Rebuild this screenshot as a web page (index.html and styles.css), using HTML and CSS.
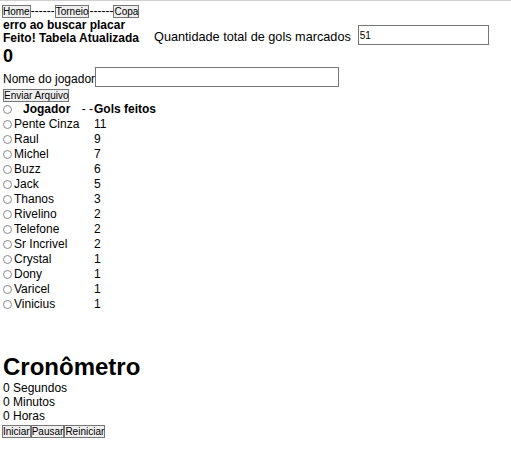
FILE: index.html
```html
<!DOCTYPE html>
<html lang="pt-BR">
<head>
<meta charset="utf-8">
<title>Placar</title>
<link rel="stylesheet" href="styles.css">
</head>
<body>
<div class="topline"></div>
<nav class="nav"><button class="btn">Home</button><span class="dash">------</span><button class="btn">Torneio</button><span class="dash">------</span><button class="btn">Copa</button></nav>
<div class="status">
  <div class="msgs">
    <h4 class="msg">erro ao buscar placar</h4>
    <h4 class="msg">Feito! Tabela Atualizada</h4>
    <h2 class="zero">0</h2>
  </div>
  <div class="total">
    <span class="total-label">Quantidade total de gols marcados</span>
    <input class="total-input" type="text" value="51">
  </div>
</div>
<div class="player-form">
  <span class="player-label">Nome do jogador</span><input class="player-input" type="text">
</div>
<div class="send-row"><button class="btn">Enviar Arquivo</button></div>
<div class="table">
  <div class="row head">
    <div class="c1"><span class="radio"></span><span class="h-name">Jogador</span><span class="h-dash">- -</span></div>
    <div class="c2">Gols feitos</div>
  </div>
  <div class="row"><div class="c1"><span class="radio"></span>Pente Cinza</div><div class="c2">11</div></div>
  <div class="row"><div class="c1"><span class="radio"></span>Raul</div><div class="c2">9</div></div>
  <div class="row"><div class="c1"><span class="radio"></span>Michel</div><div class="c2">7</div></div>
  <div class="row"><div class="c1"><span class="radio"></span>Buzz</div><div class="c2">6</div></div>
  <div class="row"><div class="c1"><span class="radio"></span>Jack</div><div class="c2">5</div></div>
  <div class="row"><div class="c1"><span class="radio"></span>Thanos</div><div class="c2">3</div></div>
  <div class="row"><div class="c1"><span class="radio"></span>Rivelino</div><div class="c2">2</div></div>
  <div class="row"><div class="c1"><span class="radio"></span>Telefone</div><div class="c2">2</div></div>
  <div class="row"><div class="c1"><span class="radio"></span>Sr Incrivel</div><div class="c2">2</div></div>
  <div class="row"><div class="c1"><span class="radio"></span>Crystal</div><div class="c2">1</div></div>
  <div class="row"><div class="c1"><span class="radio"></span>Dony</div><div class="c2">1</div></div>
  <div class="row"><div class="c1"><span class="radio"></span>Varicel</div><div class="c2">1</div></div>
  <div class="row"><div class="c1"><span class="radio"></span>Vinicius</div><div class="c2">1</div></div>
</div>
<h1 class="timer-title">Cronômetro</h1>
<div class="timer-line">0 Segundos</div>
<div class="timer-line">0 Minutos</div>
<div class="timer-line">0 Horas</div>
<div class="timer-btns"><button class="btn">Iniciar</button><button class="btn">Pausar</button><button class="btn">Reiniciar</button></div>
</body>
</html>
```

FILE: styles.css
```css
html, body {
  margin: 0;
  padding: 0;
  background: #fff;
}
body {
  padding: 0 2px;
  font-family: "Liberation Sans", Arial, sans-serif;
  font-size: 12px;
  color: #000;
}
.topline {
  margin: 0 -2px;
  border-top: 1px solid #cfcfcf;
}
.nav {
  display: flex;
  align-items: center;
  margin-top: 3px;
  height: 14px;
}
.dash {
  font-size: 12px;
  line-height: 14px;
}
.btn {
  font-family: "Liberation Sans", Arial, sans-serif;
  font-size: 10px;
  line-height: 11px;
  padding: 0;
  margin: 0;
  border: 1px solid #767676;
  border-radius: 0;
  background: #efefef;
  color: #000;
  height: 13px;
}
.status {
  display: flex;
  align-items: flex-start;
  gap: 15px;
  margin-top: 1px;
}
.msgs {
  display: flex;
  flex-direction: column;
  padding-left: 1px;
}
.msg {
  margin: 0;
  font-size: 12px;
  line-height: 13px;
  font-weight: bold;
}
.zero {
  margin: 0;
  font-size: 18px;
  line-height: 22px;
  font-weight: bold;
}
.total {
  display: flex;
  align-items: flex-end;
  gap: 7px;
  margin-top: 6px;
}
.total-label {
  font-size: 12.7px;
  line-height: 15px;
}
.total-input {
  box-sizing: border-box;
  width: 131px;
  height: 20px;
  margin: 0;
  padding: 0 1px;
  border: 1px solid #767676;
  font-family: "Liberation Sans", Arial, sans-serif;
  font-size: 10px;
  color: #000;
}
.player-form {
  display: flex;
  align-items: flex-end;
  margin-top: 0;
  padding-left: 1px;
}
.player-label {
  line-height: 14px;
  padding-bottom: 1px;
}
.player-input {
  box-sizing: border-box;
  width: 244px;
  height: 20px;
  margin: 0;
  padding: 0 1px;
  border: 1px solid #767676;
  font-size: 10px;
}
.send-row {
  display: flex;
  margin-top: 2px;
  padding-left: 1px;
}
.table {
  display: flex;
  flex-direction: column;
  padding-left: 1px;
}
.row {
  display: flex;
  height: 15px;
  line-height: 15px;
}
.c1 {
  width: 90px;
  display: flex;
  align-items: flex-start;
}
.c2 {
  padding-left: 1px;
}
.radio {
  box-sizing: border-box;
  width: 9px;
  height: 9px;
  margin-top: 3px;
  margin-right: 2px;
  border: 1px solid #8a8a8a;
  border-radius: 50%;
  background: #fff;
  flex: none;
}
.head {
  font-weight: bold;
}
.h-name {
  margin-left: 9px;
}
.h-dash {
  margin-left: auto;
  font-weight: normal;
}
.timer-title {
  margin: 41px 0 0;
  font-size: 24px;
  line-height: 28px;
  font-weight: bold;
  padding-left: 1px;
}
.timer-line {
  line-height: 14px;
  padding-left: 1px;
}
.timer-btns {
  display: flex;
  margin-top: 2px;
}
```
